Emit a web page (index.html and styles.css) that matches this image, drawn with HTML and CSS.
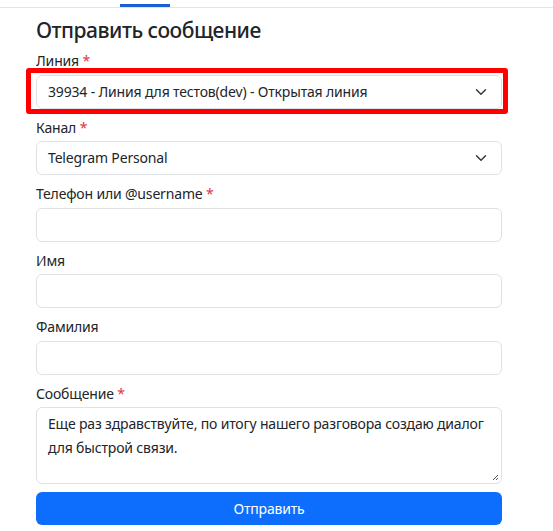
FILE: index.html
```html
<!DOCTYPE html>
<html lang="ru">
<head>
<meta charset="utf-8">
<title>Отправить сообщение</title>
<link rel="stylesheet" href="styles.css">
</head>
<body>
<div class="tabs"><div class="tab-active"></div></div>
<main class="page">
  <h1 class="title">Отправить сообщение</h1>
  <form class="form">
    <div class="field">
      <label class="label">Линия <span class="req">*</span></label>
      <div class="highlight-wrap">
        <div class="select">
          <span>39934 - Линия для тестов(dev) - Открытая линия</span>
          <svg class="chev" width="16" height="12" viewBox="0 0 16 16"><path d="m2 5 6 6 6-6" fill="none" stroke="#343a40" stroke-width="2" stroke-linecap="round" stroke-linejoin="round"/></svg>
        </div>
        <div class="highlight"></div>
      </div>
    </div>
    <div class="field">
      <label class="label">Канал <span class="req">*</span></label>
      <div class="select">
        <span>Telegram Personal</span>
        <svg class="chev" width="16" height="12" viewBox="0 0 16 16"><path d="m2 5 6 6 6-6" fill="none" stroke="#343a40" stroke-width="2" stroke-linecap="round" stroke-linejoin="round"/></svg>
      </div>
    </div>
    <div class="field">
      <label class="label">Телефон или @username <span class="req">*</span></label>
      <div class="input"></div>
    </div>
    <div class="field">
      <label class="label">Имя</label>
      <div class="input"></div>
    </div>
    <div class="field">
      <label class="label">Фамилия</label>
      <div class="input"></div>
    </div>
    <div class="field">
      <label class="label">Сообщение <span class="req">*</span></label>
      <div class="textarea">
        Еще раз здравствуйте, по итогу нашего разговора создаю диалог для быстрой связи.
        <svg class="grip" width="8" height="8" viewBox="0 0 8 8"><path d="M7 2 2 7M7 5 5 7" stroke="#555" stroke-width="1"/></svg>
      </div>
    </div>
    <button type="button" class="btn">Отправить</button>
  </form>
</main>
</body>
</html>
```
FILE: styles.css
```css
* { box-sizing: border-box; }
body {
  margin: 0;
  background: #fff;
  font-family: "Noto Sans", "Open Sans", sans-serif;
  font-size: 14px;
  letter-spacing: -0.17px;
  color: #212529;
}
.tabs {
  height: 8px;
  border-bottom: 1px solid #e3e3e3;
  display: flex;
  align-items: flex-end;
}
.tab-active {
  margin-left: 120px;
  width: 50px;
  height: 3px;
  background: #1a5fd6;
}
.page {
  padding: 0 51px 0 36px;
}
.title {
  margin: 6px 0 4px;
  font-size: 21px;
  letter-spacing: -0.5px;
  font-weight: 500;
  line-height: 32px;
}
.form {
  display: flex;
  flex-direction: column;
  gap: 8px;
}
.label {
  display: block;
  line-height: 21px;
  margin-bottom: 3.5px;
}
.req { color: #dc3545; }
.select, .input {
  height: 34px;
  border: 1px solid #dee2e6;
  border-radius: 6px;
  padding: 0 12px 0 11px;
  display: flex;
  align-items: center;
  justify-content: space-between;
  line-height: 20px;
}
.chev { flex: none; }
.highlight-wrap { position: relative; }
.highlight {
  position: absolute;
  left: -10px;
  top: -7px;
  right: -6px;
  bottom: -5px;
  border: 5px solid #ff0000;
  border-radius: 3px;
  pointer-events: none;
}
.textarea {
  position: relative;
  height: 77px;
  border: 1px solid #dee2e6;
  border-radius: 6px;
  padding: 4px 11px;
  line-height: 24px;
}
.grip {
  position: absolute;
  right: 2px;
  bottom: 2px;
}
.btn {
  height: 33px;
  border: 0;
  border-radius: 6px;
  background: #0d6efd;
  color: #fff;
  font: inherit;
  letter-spacing: inherit;
  font-size: 14px;
}
```
